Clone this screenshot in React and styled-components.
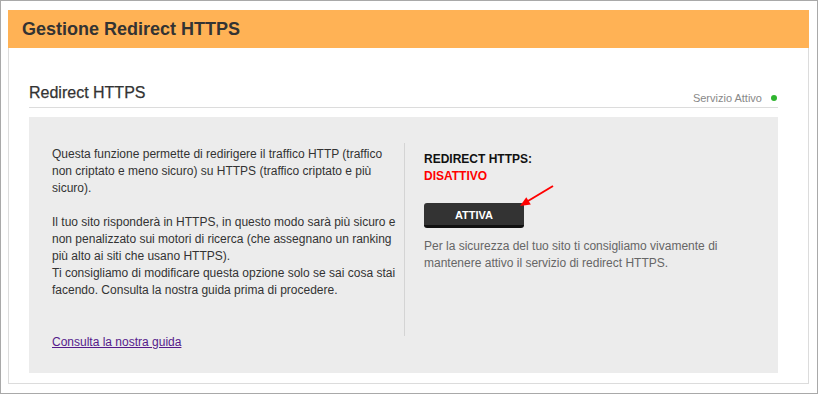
import React from "react";
import styled, { createGlobalStyle } from "styled-components";

const Global = createGlobalStyle`
  html, body { margin: 0; padding: 0; background: #fff; }
  body { font-family: "Liberation Sans", Arial, sans-serif; }
  * { box-sizing: border-box; }
`;

const Frame = styled.div`
  width: 818px;
  height: 394px;
  border: 1px solid #a9a9a9;
  padding: 9px 0 0 7px;
  background: #fff;
`;

const Panel = styled.section`
  width: 801px;
`;

const PanelHeader = styled.header`
  height: 38px;
  background: #ffb255;
  padding-left: 14px;
  font-size: 18px;
  font-weight: bold;
  line-height: 39px;
  color: #333;
`;

const PanelBody = styled.div`
  border: 1px solid #dcdcdc;
  border-top: none;
  padding: 35px 30px 10px 20px;
`;

const SectionHead = styled.div`
  display: flex;
  justify-content: space-between;
  align-items: flex-end;
  border-bottom: 1px solid #dcdcdc;
  padding: 0 1px 4px 0;
`;

const SectionTitle = styled.h3`
  margin: 0;
  font-size: 16px;
  font-weight: normal;
  line-height: 20px;
  color: #333;
  -webkit-text-stroke: 0.25px #333;
`;

const Status = styled.div`
  display: flex;
  align-items: center;
  gap: 9px;
  margin-bottom: -2px;
  font-size: 11px;
  line-height: 14px;
  color: #888;
`;

const Dot = styled.span`
  width: 6px;
  height: 6px;
  border-radius: 50%;
  background: ${(p) => p.color};
`;

const Box = styled.div`
  margin-top: 9px;
  background: #ececec;
  padding: 26px 23px 22px 23px;
  display: flex;
  align-items: flex-start;
`;

const LeftCol = styled.div`
  flex: 0 0 352px;
  padding: 3px 6px 0 0;
  font-size: 12px;
  line-height: 17px;
  color: #333;
`;

const Para = styled.p`
  margin: 0;
`;

const GuideLink = styled.a`
  display: inline-block;
  margin-top: 35px;
  color: #551a8b;
  text-decoration: underline;
  font-size: 12px;
  line-height: 17px;
`;

const RightCol = styled.div`
  flex: 1;
  min-height: 193px;
  border-left: 1px solid #d4d4d4;
  padding: 8px 0 0 19px;
  font-size: 12px;
  line-height: 17px;
`;

const Label = styled.div`
  font-weight: bold;
  color: ${(p) => p.color};
`;

const ButtonWrap = styled.div`
  position: relative;
  width: 100px;
  margin-top: 18px;
`;

const ActionButton = styled.button`
  display: block;
  width: 100px;
  height: 25px;
  border: none;
  border-bottom: 3px solid #111;
  border-radius: 3px;
  background: #333;
  color: #fff;
  font-family: "Liberation Sans", Arial, sans-serif;
  font-size: 11px;
  font-weight: bold;
  padding: 1px 0 0;
  cursor: pointer;
`;

const Arrow = styled.svg`
  position: absolute;
  left: 90px;
  top: -22px;
  overflow: visible;
`;

const Note = styled.p`
  margin: 10px 0 0;
  color: #666;
`;

export default function App() {
  return (
    <>
      <Global />
      <Frame>
        <Panel>
          <PanelHeader>Gestione Redirect HTTPS</PanelHeader>
          <PanelBody>
            <SectionHead>
              <SectionTitle>Redirect HTTPS</SectionTitle>
              <Status>
                Servizio Attivo
                <Dot color="#2fb52f" />
              </Status>
            </SectionHead>
            <Box>
              <LeftCol>
                <Para>
                  Questa funzione permette di redirigere il traffico HTTP
                  (traffico non criptato e meno sicuro) su HTTPS (traffico
                  criptato e più sicuro).
                  <br />
                  <br />
                  Il tuo sito risponderà in HTTPS, in questo modo sarà più
                  sicuro e non penalizzato sui motori di ricerca (che assegnano
                  un ranking più alto ai siti che usano HTTPS).
                  <br />
                  Ti consigliamo di modificare questa opzione solo se sai cosa
                  stai facendo. Consulta la nostra guida prima di procedere.
                </Para>
                <GuideLink href="#">Consulta la nostra guida</GuideLink>
              </LeftCol>
              <RightCol>
                <Label color="#111">REDIRECT HTTPS:</Label>
                <Label color="#f00">DISATTIVO</Label>
                <ButtonWrap>
                  <ActionButton>ATTIVA</ActionButton>
                  <Arrow width="45" height="30" viewBox="0 0 45 30">
                    <line
                      x1="39"
                      y1="5"
                      x2="14"
                      y2="20"
                      stroke="#f00"
                      strokeWidth="2"
                    />
                    <polygon points="6,25 16.8,23.4 12.3,16.2" fill="#f00" />
                  </Arrow>
                </ButtonWrap>
                <Note>
                  Per la sicurezza del tuo sito ti consigliamo vivamente di
                  mantenere attivo il servizio di redirect HTTPS.
                </Note>
              </RightCol>
            </Box>
          </PanelBody>
        </Panel>
      </Frame>
    </>
  );
}
